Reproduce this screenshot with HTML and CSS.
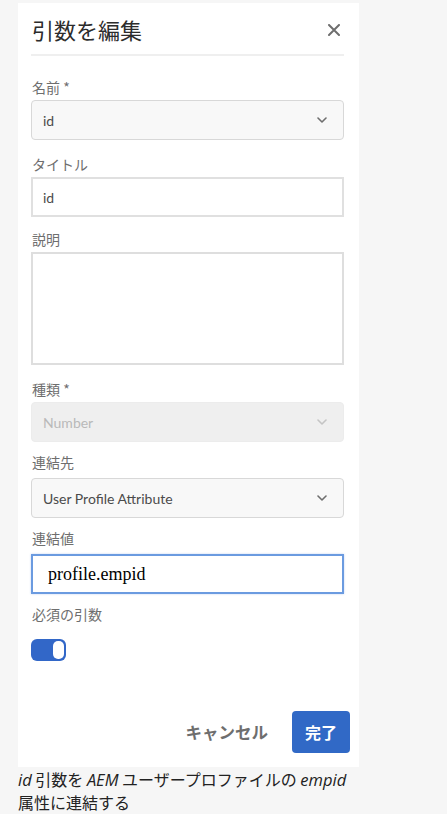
FILE: index.html
```html
<!DOCTYPE html>
<html lang="ja">
<head>
<meta charset="utf-8">
<title>引数を編集</title>
<link rel="stylesheet" href="styles.css">
</head>
<body>
<div class="panel">
  <div class="header">
    <h1 class="title">引数を編集</h1>
    <svg class="close" width="12" height="12" viewBox="0 0 12 12"><path d="M1 1L11 11M11 1L1 11" stroke="#6e6e6e" stroke-width="2" stroke-linecap="round"/></svg>
  </div>

  <div class="field first">
    <div class="label">名前 *</div>
    <div class="select"><span>id</span><svg class="chev" width="10" height="6" viewBox="0 0 10 6"><path d="M1 1L5 5L9 1" fill="none" stroke="#6e6e6e" stroke-width="1.6" stroke-linecap="round" stroke-linejoin="round"/></svg></div>
  </div>

  <div class="field">
    <div class="label">タイトル</div>
    <div class="input"><span>id</span></div>
  </div>

  <div class="field tight">
    <div class="label">説明</div>
    <div class="textarea"></div>
  </div>

  <div class="field">
    <div class="label">種類 *</div>
    <div class="select disabled"><span>Number</span><svg class="chev" width="10" height="6" viewBox="0 0 10 6"><path d="M1 1L5 5L9 1" fill="none" stroke="#c4c4c4" stroke-width="1.6" stroke-linecap="round" stroke-linejoin="round"/></svg></div>
  </div>

  <div class="field lower">
    <div class="label">連結先</div>
    <div class="select"><span>User Profile Attribute</span><svg class="chev" width="10" height="6" viewBox="0 0 10 6"><path d="M1 1L5 5L9 1" fill="none" stroke="#6e6e6e" stroke-width="1.6" stroke-linecap="round" stroke-linejoin="round"/></svg></div>
  </div>

  <div class="field lower">
    <div class="label">連結値</div>
    <div class="input focused"><span>profile.empid</span></div>
  </div>

  <div class="field lower toggle-field">
    <div class="label">必須の引数</div>
    <div class="toggle"><div class="knob"></div></div>
  </div>

  <div class="footer">
    <span class="cancel">キャンセル</span>
    <span class="done">完了</span>
  </div>
</div>
<div class="caption">
  <div class="cap-line"><i>id</i> 引数を <i>AEM</i> ユーザープロファイルの <i>empid</i></div>
  <div class="cap-line">属性に連結する</div>
</div>
</body>
</html>
```

FILE: styles.css
```css
html, body {
  margin: 0;
  padding: 0;
}
body {
  background: #f6f6f6;
  font-family: "Noto Sans CJK JP", sans-serif;
  width: 447px;
  height: 814px;
  overflow: hidden;
}
.panel {
  margin: 3px 0 0 18px;
  width: 341px;
  box-sizing: border-box;
  background: #fff;
  padding: 0 15px 14px 13px;
}
.header {
  height: 51px;
  display: flex;
  align-items: center;
  justify-content: space-between;
  border-bottom: 2px solid #efefef;
}
.title {
  margin: 0 0 0 1px;
  font-size: 22px;
  font-weight: 400;
  color: #2c2c2c;
  line-height: 26px;
}
.close {
  margin-right: 4px;
  margin-top: 2px;
}
.field {
  margin-top: 14px;
}
.field.first {
  margin-top: 21px;
}
.field.tight {
  margin-top: 12px;
}
.label {
  font-size: 14px;
  line-height: 20px;
  color: #6e6e6e;
  margin-bottom: 3px;
  padding-left: 1px;
}
.field.lower {
  margin-top: 10px;
}
.field.lower .label {
  margin-bottom: 6px;
}
.field.toggle-field .label {
  margin-bottom: 15px;
}
.select, .input {
  height: 40px;
  box-sizing: border-box;
  display: flex;
  align-items: center;
  justify-content: space-between;
  font-family: "Lato", "Liberation Sans", sans-serif;
  font-size: 14px;
  color: #4b4b4b;
}
.select {
  background: #f8f8f8;
  border: 1.5px solid #d8d8d8;
  border-radius: 4px;
  padding: 0 16px 0 11px;
}
.select.disabled {
  background: #efefef;
  border-color: #ececec;
  color: #b9b9b9;
}
.input {
  background: #fff;
  border: 2px solid #e0e0e0;
  padding: 0 11px 0 10px;
}
.input.focused {
  border-color: #6b9be0;
  box-shadow: 0 0 2px rgba(80, 130, 220, 0.35);
  font-family: "Liberation Serif", serif;
  font-size: 18px;
  color: #000;
  padding-left: 15px;
}
.textarea {
  height: 113px;
  box-sizing: border-box;
  border: 2px solid #dedede;
  background: #fff;
}
.toggle {
  width: 35px;
  height: 22px;
  box-sizing: border-box;
  background: #3267c8;
  border-radius: 6px;
  padding: 2px 2px 2px 0;
  display: flex;
  justify-content: flex-end;
}
.knob {
  width: 11px;
  height: 18px;
  background: #fff;
  border-radius: 5px;
}
.footer {
  margin-top: 50px;
  margin-right: -6px;
  display: flex;
  justify-content: flex-end;
  align-items: center;
  gap: 24px;
}
.cancel {
  font-size: 16.5px;
  font-weight: 700;
  color: #6e6e6e;
  line-height: 20px;
}
.done {
  height: 42px;
  box-sizing: border-box;
  padding: 0 13px;
  display: flex;
  align-items: center;
  background: #3169c6;
  color: #fff;
  font-size: 16px;
  font-weight: 700;
  border-radius: 4px;
}
.caption {
  margin: 1px 0 0 18px;
  font-size: 16px;
  line-height: 23px;
  color: #222;
}
.cap-line {
  height: 23px;
  white-space: nowrap;
}
.caption i {
  font-family: "Open Sans", sans-serif;
  font-style: italic;
  font-size: 16.5px;
}
```
